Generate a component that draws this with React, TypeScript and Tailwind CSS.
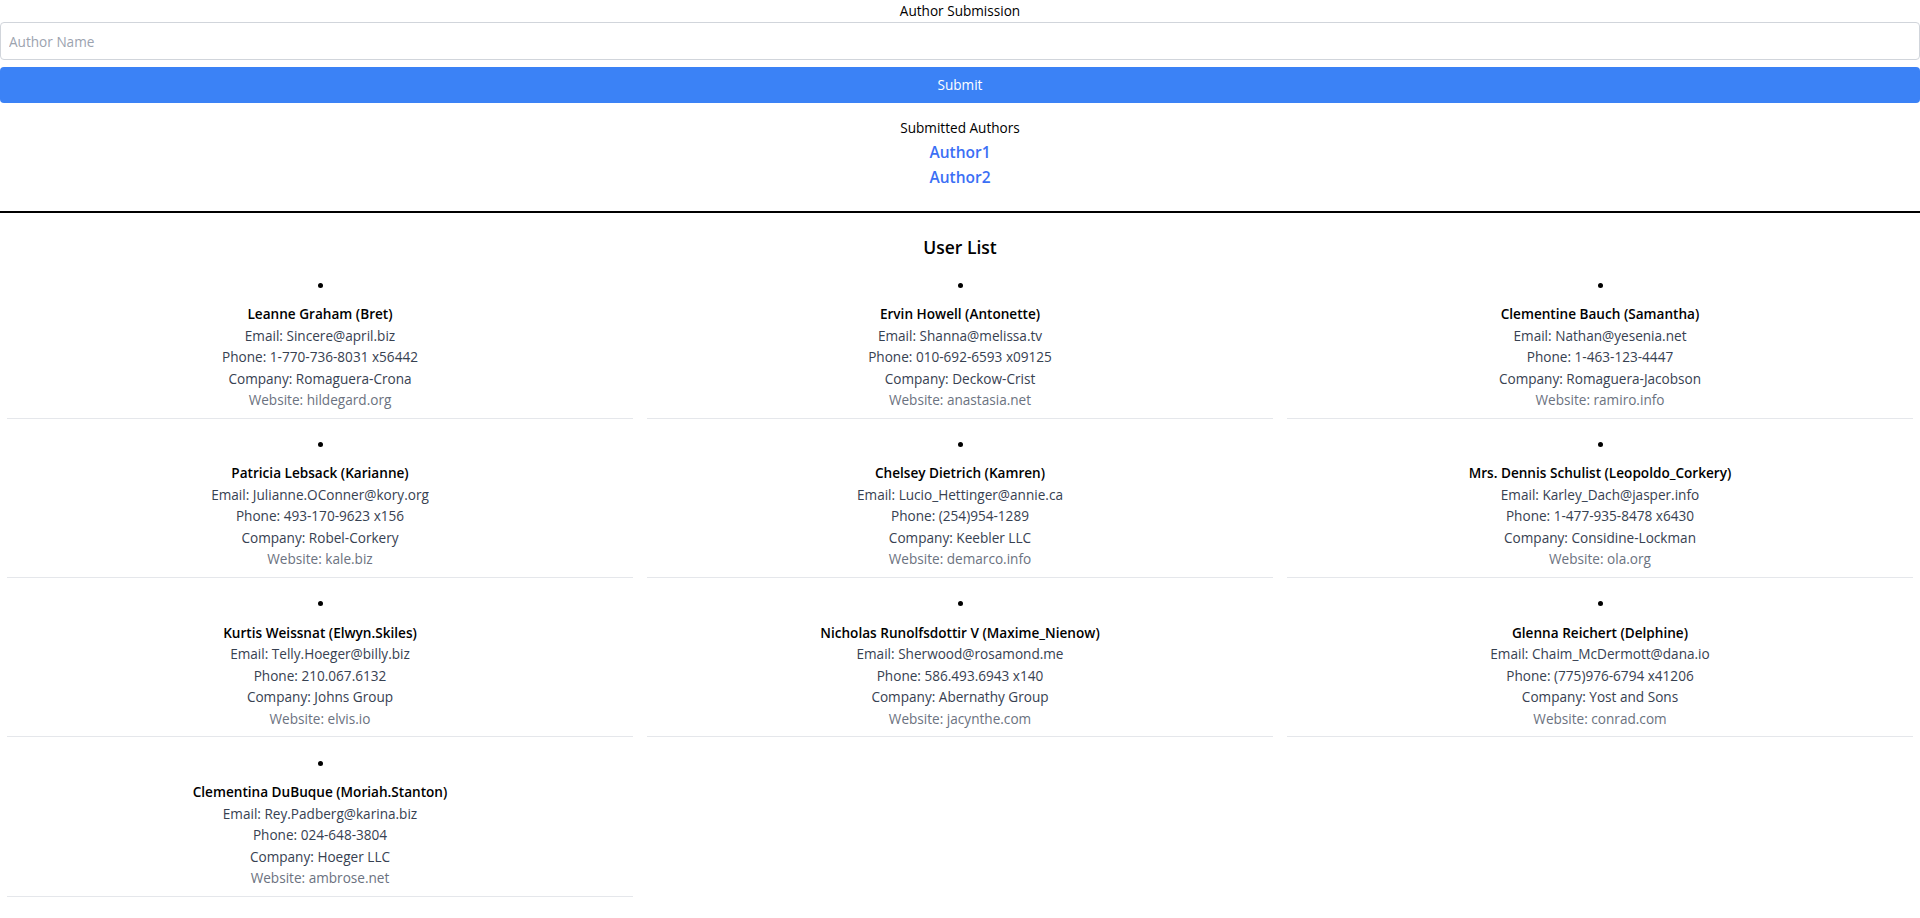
import React from "react";

type User = {
  name: string;
  username: string;
  email: string;
  phone: string;
  company: string;
  website: string;
};

const users: User[] = [
  { name: "Leanne Graham", username: "Bret", email: "Sincere@april.biz", phone: "1-770-736-8031 x56442", company: "Romaguera-Crona", website: "hildegard.org" },
  { name: "Ervin Howell", username: "Antonette", email: "Shanna@melissa.tv", phone: "010-692-6593 x09125", company: "Deckow-Crist", website: "anastasia.net" },
  { name: "Clementine Bauch", username: "Samantha", email: "Nathan@yesenia.net", phone: "1-463-123-4447", company: "Romaguera-Jacobson", website: "ramiro.info" },
  { name: "Patricia Lebsack", username: "Karianne", email: "Julianne.OConner@kory.org", phone: "493-170-9623 x156", company: "Robel-Corkery", website: "kale.biz" },
  { name: "Chelsey Dietrich", username: "Kamren", email: "Lucio_Hettinger@annie.ca", phone: "(254)954-1289", company: "Keebler LLC", website: "demarco.info" },
  { name: "Mrs. Dennis Schulist", username: "Leopoldo_Corkery", email: "Karley_Dach@jasper.info", phone: "1-477-935-8478 x6430", company: "Considine-Lockman", website: "ola.org" },
  { name: "Kurtis Weissnat", username: "Elwyn.Skiles", email: "Telly.Hoeger@billy.biz", phone: "210.067.6132", company: "Johns Group", website: "elvis.io" },
  { name: "Nicholas Runolfsdottir V", username: "Maxime_Nienow", email: "Sherwood@rosamond.me", phone: "586.493.6943 x140", company: "Abernathy Group", website: "jacynthe.com" },
  { name: "Glenna Reichert", username: "Delphine", email: "Chaim_McDermott@dana.io", phone: "(775)976-6794 x41206", company: "Yost and Sons", website: "conrad.com" },
  { name: "Clementina DuBuque", username: "Moriah.Stanton", email: "Rey.Padberg@karina.biz", phone: "024-648-3804", company: "Hoeger LLC", website: "ambrose.net" },
];

export default function App() {
  return (
    <div className="min-h-screen bg-white font-['Segoe_UI','Open_Sans',sans-serif] text-[13.6px] text-black">
      <div className="text-center leading-[22px]">Author Submission</div>
      <input
        type="text"
        placeholder="Author Name"
        className="block h-[38px] w-full rounded-[4px] border border-[#d1d5db] px-2 text-[13.6px] outline-none placeholder:text-[#9ca3af]"
      />
      <button className="mt-[7px] block h-[36px] w-full rounded-[4px] bg-[#3b82f6] text-[13.6px] text-white">
        Submit
      </button>
      <div className="mt-3 text-center leading-[25px]">
        <div className="leading-[25px]">Submitted Authors</div>
        <div className="text-[15.5px] font-semibold leading-[25px] text-[#3b6ff5]">Author1</div>
        <div className="text-[15.5px] font-semibold leading-[25px] text-[#3b6ff5]">Author2</div>
      </div>
      <div className="mt-[21px] h-[2px] w-full bg-black" />
      <h2 className="mt-5 text-center text-[17.5px] font-semibold leading-[28px]">User List</h2>
      <ul className="mt-[13px] grid grid-cols-3 gap-x-[14px] gap-y-[14.9px] px-[7px]">
        {users.map((u) => (
          <li key={u.email} className="border-b border-[#e5e7eb] pb-[7px] pt-[1px] text-center">
            <div className="flex h-5 items-center justify-center">
              <span className="block h-[5px] w-[5px] rounded-full bg-black" />
            </div>
            <div className="mt-2 leading-[21.5px]">
              <div className="font-semibold text-black">
                {u.name} ({u.username})
              </div>
              <div className="text-[#374151]">Email: {u.email}</div>
              <div className="text-[#374151]">Phone: {u.phone}</div>
              <div className="text-[#374151]">Company: {u.company}</div>
              <div className="text-[#6b7280]">Website: {u.website}</div>
            </div>
          </li>
        ))}
      </ul>
    </div>
  );
}
